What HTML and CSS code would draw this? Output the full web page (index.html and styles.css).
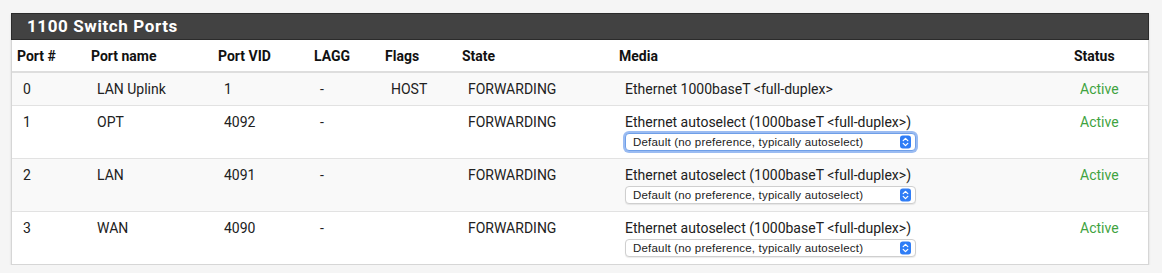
FILE: index.html
```html
<!DOCTYPE html>
<html>
<head>
<meta charset="utf-8">
<link rel="stylesheet" href="styles.css">
</head>
<body>
<div class="panel">
  <div class="panel-heading">1100 Switch Ports</div>
  <table class="ports">
    <colgroup>
      <col class="c-port"><col class="c-name"><col class="c-vid"><col class="c-lagg"><col class="c-flags"><col class="c-state"><col class="c-media"><col class="c-status">
    </colgroup>
    <thead>
      <tr><th>Port #</th><th>Port name</th><th>Port VID</th><th>LAGG</th><th>Flags</th><th>State</th><th>Media</th><th>Status</th></tr>
    </thead>
    <tbody>
      <tr class="odd">
        <td>0</td><td>LAN Uplink</td><td>1</td><td>-</td><td>HOST</td><td>FORWARDING</td><td>Ethernet 1000baseT &lt;full-duplex&gt;</td><td class="ok">Active</td>
      </tr>
      <tr>
        <td>1</td><td>OPT</td><td>4092</td><td>-</td><td></td><td>FORWARDING</td>
        <td><div>Ethernet autoselect (1000baseT &lt;full-duplex&gt;)</div>
          <div class="sel focus"><span class="sel-text">Default (no preference, typically autoselect)</span><svg class="arrow" viewBox="0 0 12 14"><rect width="12" height="14" rx="3" fill="#2f7df6"/><path d="M3.5 5.5 L6 3 L8.5 5.5 M3.5 8.5 L6 11 L8.5 8.5" stroke="#fff" stroke-width="1.4" fill="none" stroke-linecap="round" stroke-linejoin="round"/></svg></div></td>
        <td class="ok">Active</td>
      </tr>
      <tr class="odd">
        <td>2</td><td>LAN</td><td>4091</td><td>-</td><td></td><td>FORWARDING</td>
        <td><div>Ethernet autoselect (1000baseT &lt;full-duplex&gt;)</div>
          <div class="sel"><span class="sel-text">Default (no preference, typically autoselect)</span><svg class="arrow" viewBox="0 0 12 14"><rect width="12" height="14" rx="3" fill="#2f7df6"/><path d="M3.5 5.5 L6 3 L8.5 5.5 M3.5 8.5 L6 11 L8.5 8.5" stroke="#fff" stroke-width="1.4" fill="none" stroke-linecap="round" stroke-linejoin="round"/></svg></div></td>
        <td class="ok">Active</td>
      </tr>
      <tr>
        <td>3</td><td>WAN</td><td>4090</td><td>-</td><td></td><td>FORWARDING</td>
        <td><div>Ethernet autoselect (1000baseT &lt;full-duplex&gt;)</div>
          <div class="sel"><span class="sel-text">Default (no preference, typically autoselect)</span><svg class="arrow" viewBox="0 0 12 14"><rect width="12" height="14" rx="3" fill="#2f7df6"/><path d="M3.5 5.5 L6 3 L8.5 5.5 M3.5 8.5 L6 11 L8.5 8.5" stroke="#fff" stroke-width="1.4" fill="none" stroke-linecap="round" stroke-linejoin="round"/></svg></div></td>
        <td class="ok">Active</td>
      </tr>
    </tbody>
  </table>
</div>
</body>
</html>
```

FILE: styles.css
```css
html, body {
  margin: 0;
  padding: 0;
  background: #f5f5f5;
}
body {
  font-family: Roboto, "Liberation Sans", sans-serif;
  font-size: 14px;
  color: #212121;
  padding: 13px 13px 0 11px;
}
.panel {
  background: #fff;
  border: 1px solid #d6d6d6;
  box-shadow: 0 1px 2px rgba(0,0,0,0.12);
  width: 1136px;
}
.panel-heading {
  background: #424242;
  border: 1px solid #2b2b2b;
  margin: -1px -1px 0 -1px;
  color: #fff;
  font-weight: bold;
  font-size: 17px;
  line-height: 25px;
  height: 25px;
  padding-left: 15px;
  letter-spacing: 0.6px;
}
.ports {
  width: 100%;
  border-collapse: collapse;
  table-layout: fixed;
}
.c-port { width: 74px; }
.c-name { width: 127px; }
.c-vid { width: 96px; }
.c-lagg { width: 71px; }
.c-flags { width: 77px; }
.c-state { width: 157px; }
.c-media { width: 455px; }
.c-status { width: 79px; }
.ports th {
  text-align: left;
  font-weight: bold;
  color: #111;
  padding: 6px 0 5px 5px;
  line-height: 20px;
  border-bottom: 2px solid #dedede;
}
.ports td {
  padding: 6px 0 6px 11px;
  line-height: 20px;
  vertical-align: top;
  border-bottom: 1px solid #e2e2e2;
}
.ports tbody tr:last-child td { border-bottom: none; }
.ports tr.odd td { background: #f9f9f9; }
.ok { color: #3fa33f; }
.sel {
  position: relative;
  margin-top: 1px;
  margin-bottom: 1px;
  width: 289px;
  height: 16px;
  border: 1px solid #cfcfcf;
  border-radius: 4px;
  background: #fff;
  box-shadow: 0 1px 1px rgba(0,0,0,0.08);
  font-family: "Liberation Sans", Arial, sans-serif;
  font-size: 11.5px;
  line-height: 16px;
  color: #222;
  box-sizing: content-box;
}
.sel.focus {
  border-color: #6f9fe8;
  box-shadow: 0 0 0 2px #9bbcf2;
}
.sel-text {
  padding-left: 7px;
  letter-spacing: 0.2px;
}
.arrow {
  position: absolute;
  right: 4px;
  top: 1px;
  width: 11px;
  height: 14px;
}
```
